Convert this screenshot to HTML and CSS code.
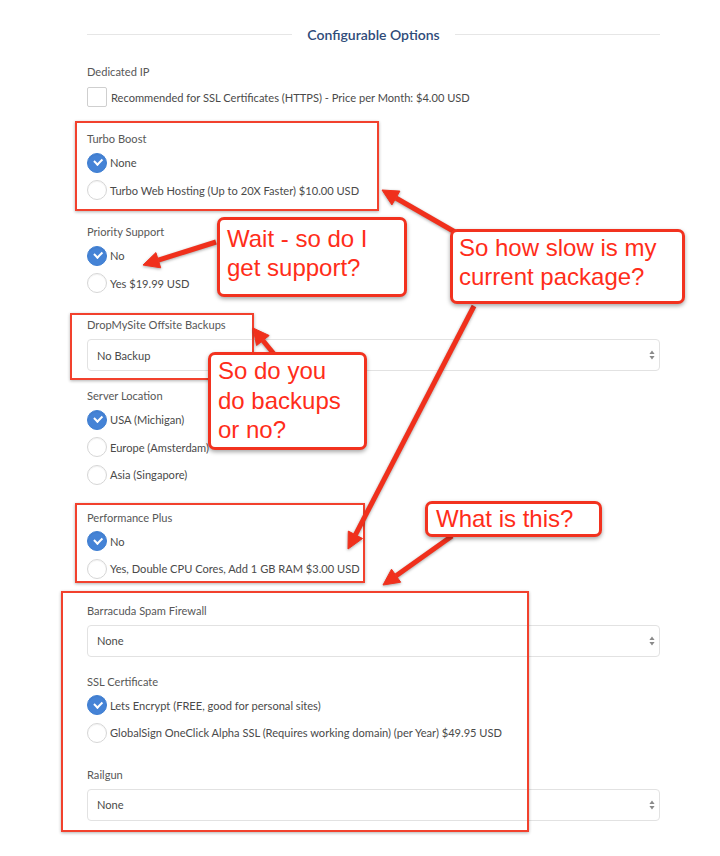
FILE: index.html
```html
<!DOCTYPE html>
<html>
<head>
<meta charset="utf-8">
<link rel="stylesheet" href="styles.css">
</head>
<body>
<div class="page">
  <div class="title"><span>Configurable Options</span></div>

  <div class="group group-check">
    <div class="label">Dedicated IP</div>
    <div class="opt"><span class="checkbox"></span>Recommended for SSL Certificates (HTTPS) - Price per Month: $4.00 USD</div>
  </div>

  <div class="group">
    <div class="label">Turbo Boost</div>
    <div class="opt"><span class="radio on"></span>None</div>
    <div class="opt"><span class="radio"></span>Turbo Web Hosting (Up to 20X Faster) $10.00 USD</div>
  </div>

  <div class="group">
    <div class="label">Priority Support</div>
    <div class="opt"><span class="radio on"></span>No</div>
    <div class="opt"><span class="radio"></span>Yes $19.99 USD</div>
  </div>

  <div class="group group-select">
    <div class="label">DropMySite Offsite Backups</div>
    <div class="select"><span>No Backup</span><svg class="caret" width="6" height="10" viewBox="0 0 6 10"><path d="M3 0.5 L5.6 4 H0.4 Z M3 9.5 L5.6 6 H0.4 Z" fill="#8a8a8a"/></svg></div>
  </div>

  <div class="group group-wide">
    <div class="label">Server Location</div>
    <div class="opt"><span class="radio on"></span>USA (Michigan)</div>
    <div class="opt"><span class="radio"></span>Europe (Amsterdam)</div>
    <div class="opt"><span class="radio"></span>Asia (Singapore)</div>
  </div>

  <div class="group">
    <div class="label">Performance Plus</div>
    <div class="opt"><span class="radio on"></span>No</div>
    <div class="opt"><span class="radio"></span>Yes, Double CPU Cores, Add 1 GB RAM $3.00 USD</div>
  </div>

  <div class="group group-select">
    <div class="label">Barracuda Spam Firewall</div>
    <div class="select"><span>None</span><svg class="caret" width="6" height="10" viewBox="0 0 6 10"><path d="M3 0.5 L5.6 4 H0.4 Z M3 9.5 L5.6 6 H0.4 Z" fill="#8a8a8a"/></svg></div>
  </div>

  <div class="group">
    <div class="label">SSL Certificate</div>
    <div class="opt"><span class="radio on"></span>Lets Encrypt (FREE, good for personal sites)</div>
    <div class="opt"><span class="radio"></span>GlobalSign OneClick Alpha SSL (Requires working domain) (per Year) $49.95 USD</div>
  </div>

  <div class="group group-select">
    <div class="label">Railgun</div>
    <div class="select"><span>None</span><svg class="caret" width="6" height="10" viewBox="0 0 6 10"><path d="M3 0.5 L5.6 4 H0.4 Z M3 9.5 L5.6 6 H0.4 Z" fill="#8a8a8a"/></svg></div>
  </div>

  <!-- annotation overlay -->
  <div class="hl hl-turbo"></div>
  <div class="hl hl-backup"></div>
  <div class="hl hl-perf"></div>
  <div class="hl hl-bottom"></div>

  <svg class="arrows" width="720" height="856" viewBox="0 0 720 856">
    <g fill="#f0301c" stroke="#f0301c">
      <line x1="216" y1="242" x2="158.3" y2="260.2" stroke-width="5"/>
      <polygon points="143,265 160.7,267.8 155.9,252.6" stroke-width="1"/>
      <line x1="455" y1="232" x2="395.9" y2="198" stroke-width="5"/>
      <polygon points="382,190 399.9,191.1 391.9,204.9" stroke-width="1"/>
      <line x1="474" y1="306" x2="355.4" y2="534.8" stroke-width="5"/>
      <polygon points="348,549 362.5,538.5 348.3,531.1" stroke-width="1"/>
      <line x1="452" y1="536" x2="396.1" y2="575.7" stroke-width="5"/>
      <polygon points="383,585 400.7,582.2 391.5,569.2" stroke-width="1"/>
      <line x1="274" y1="354" x2="262.9" y2="340.5" stroke-width="5"/>
      <polygon points="253,328 269.2,335.5 256.6,345.5" stroke-width="1"/>
    </g>
  </svg>

  <div class="callout c-wait">Wait - so do I<br>get support?</div>
  <div class="callout c-slow">So how slow is my<br>current package?</div>
  <div class="callout c-backup">So do you<br>do backups<br>or no?</div>
  <div class="callout c-what">What is this?</div>
</div>
</body>
</html>
```
FILE: styles.css
```css
html, body {
  margin: 0;
  padding: 0;
  background: #ffffff;
}

body {
  font-family: Lato, "Open Sans", "Liberation Sans", sans-serif;
  font-size: 11.1px;
  color: #555555;
}

.page {
  position: relative;
  width: 720px;
  height: 856px;
  box-sizing: border-box;
  padding: 24px 60px 0 87px;
  overflow: hidden;
}

.title {
  display: flex;
  align-items: center;
  gap: 15px;
  height: 20px;
  margin-bottom: 20px;
  color: #2f4b79;
  font-size: 14px;
  font-weight: 600;
}

.title::before,
.title::after {
  content: "";
  flex: 1;
  border-top: 1px solid #e6e6e6;
}

.group {
  margin-bottom: 20px;
}

.group-wide {
  margin-bottom: 21px;
}

.group-check {
  margin-bottom: 24px;
}

.group-select {
  margin-bottom: 17px;
}

.label {
  height: 16px;
  line-height: 16px;
  margin-bottom: 2px;
  color: #575757;
}

.group-check .label {
  margin-bottom: 7px;
}

.group-select .label {
  margin-bottom: 6px;
}

.opt {
  display: flex;
  align-items: center;
  gap: 3px;
  height: 27.5px;
  color: #4a4a4a;
  white-space: nowrap;
}

.group-check .opt {
  height: 20px;
}

.checkbox {
  box-sizing: border-box;
  width: 20px;
  height: 20px;
  border: 1px solid #cfcfcf;
  border-radius: 2px;
  margin-right: 1px;
  background: #fff;
}

.radio {
  position: relative;
  box-sizing: border-box;
  flex: none;
  width: 20px;
  height: 20px;
  border-radius: 50%;
  border: 1px solid #d6d6d6;
  background: #fff;
  box-shadow: inset 0 1px 1px rgba(0, 0, 0, 0.05);
}

.radio.on {
  border-color: #3f7fd2;
  background: #4583d6;
}

.radio.on::after {
  content: "";
  position: absolute;
  left: 5.5px;
  top: 4.5px;
  width: 6px;
  height: 3.5px;
  border-left: 2px solid #fff;
  border-bottom: 2px solid #fff;
  transform: rotate(-45deg);
}

.select {
  box-sizing: border-box;
  display: flex;
  align-items: center;
  justify-content: space-between;
  height: 32px;
  padding: 0 4px 0 9px;
  border: 1px solid #e2e2e2;
  border-radius: 4px;
  color: #4a4a4a;
  background: #fff;
}

.caret {
  display: block;
}

/* annotations */
.hl {
  position: absolute;
  box-sizing: border-box;
  border: 2px solid #f2412d;
  box-shadow: 0 1px 3px rgba(0, 0, 0, 0.3);
}

.hl-turbo { left: 75px; top: 121px; width: 304px; height: 90px; }
.hl-backup { left: 70px; top: 313px; width: 184px; height: 67px; }
.hl-perf { left: 75px; top: 503px; width: 290px; height: 80px; }
.hl-bottom { left: 61px; top: 591px; width: 468px; height: 241px; }

.arrows {
  position: absolute;
  left: 0;
  top: 0;
  pointer-events: none;
  filter: drop-shadow(0 1px 1.5px rgba(0, 0, 0, 0.35));
}

.callout {
  position: absolute;
  box-sizing: border-box;
  background: #fff;
  border: 3px solid #f2321f;
  border-radius: 7px;
  box-shadow: 0 2px 4px rgba(0, 0, 0, 0.35);
  color: #ff2d1a;
  font-family: "Liberation Sans", Arial, sans-serif;
  font-size: 24px;
  line-height: 29px;
  white-space: nowrap;
}

.c-wait { left: 217px; top: 217px; width: 190px; height: 80px; padding: 4px 0 0 7px; }
.c-slow { left: 450px; top: 229px; width: 235px; height: 75px; padding: 1px 0 0 6px; }
.c-backup { left: 208px; top: 352px; width: 159px; height: 98px; padding: 1px 0 0 7px; line-height: 29.5px; }
.c-what { left: 425px; top: 501px; width: 177px; height: 36px; padding: 0 0 0 8px; }
```
